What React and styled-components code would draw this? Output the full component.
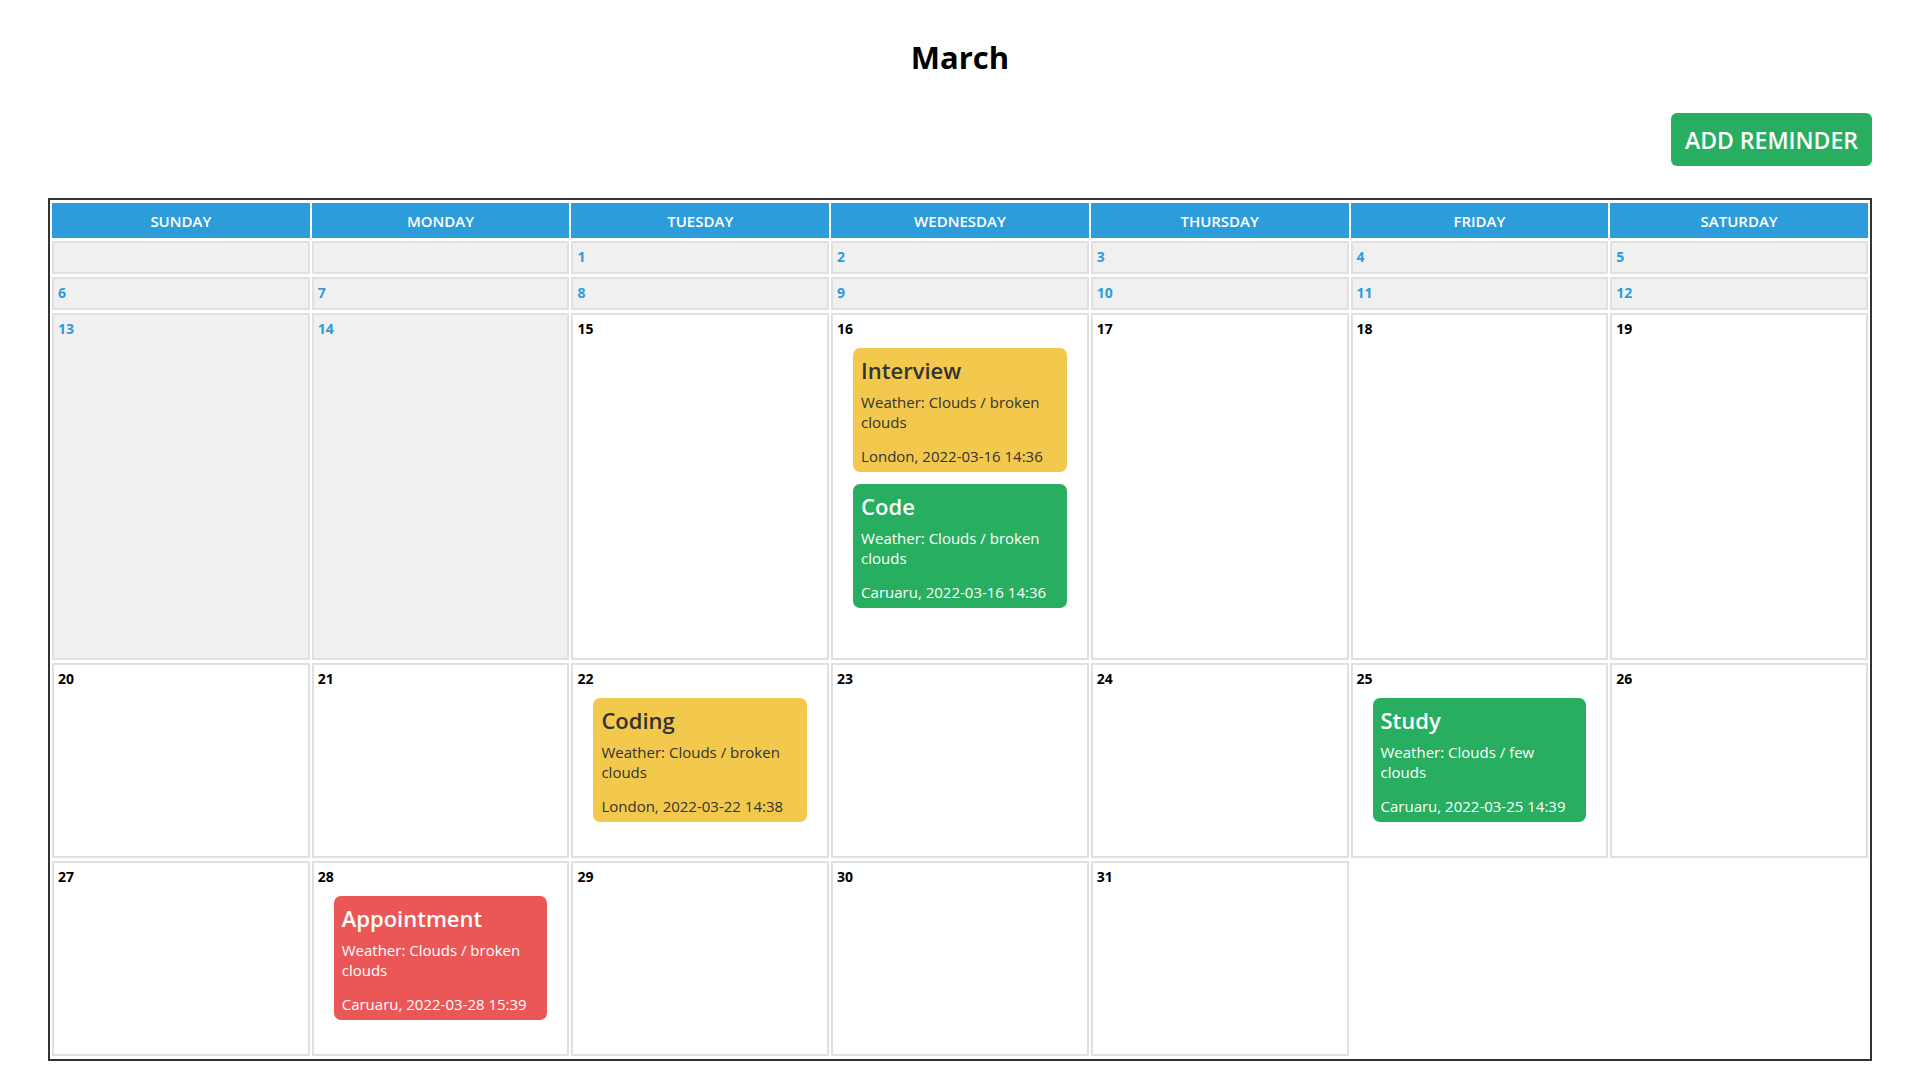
import React from 'react'
import styled, { createGlobalStyle } from 'styled-components'

const GlobalStyle = createGlobalStyle`
  * { box-sizing: border-box; }
  body {
    margin: 0;
    background: #fff;
    color: #000;
    font-family: "Open Sans", "Noto Sans", "Liberation Sans", sans-serif;
  }
`

const WEEKDAYS = ['Sunday', 'Monday', 'Tuesday', 'Wednesday', 'Thursday', 'Friday', 'Saturday']
const TODAY = 15
const FIRST_WEEKDAY = 2
const DAYS_IN_MONTH = 31

const COLORS = {
  yellow: { bg: '#F2C94C', fg: '#333333' },
  green: { bg: '#27AE60', fg: '#ffffff' },
  red: { bg: '#EB5757', fg: '#ffffff' },
}

const reminders = {
  16: [
    { title: 'Interview', weather: 'Clouds / broken clouds', city: 'London', date: '2022-03-16 14:36', color: 'yellow' },
    { title: 'Code', weather: 'Clouds / broken clouds', city: 'Caruaru', date: '2022-03-16 14:36', color: 'green' },
  ],
  22: [{ title: 'Coding', weather: 'Clouds / broken clouds', city: 'London', date: '2022-03-22 14:38', color: 'yellow' }],
  25: [{ title: 'Study', weather: 'Clouds / few clouds', city: 'Caruaru', date: '2022-03-25 14:39', color: 'green' }],
  28: [{ title: 'Appointment', weather: 'Clouds / broken clouds', city: 'Caruaru', date: '2022-03-28 15:39', color: 'red' }],
}

const buildWeeks = () => {
  const cells = [...Array(FIRST_WEEKDAY).fill(null), ...Array.from({ length: DAYS_IN_MONTH }, (_, i) => i + 1)]
  const weeks = []
  for (let i = 0; i < cells.length; i += 7) weeks.push(cells.slice(i, i + 7))
  return weeks
}

const App = () => {
  const weeks = buildWeeks()

  return (
    <Page>
      <GlobalStyle />
      <Title>March</Title>
      <Toolbar>
        <AddButton>ADD REMINDER</AddButton>
      </Toolbar>
      <Calendar>
        <thead>
          <tr>
            {WEEKDAYS.map((d) => (
              <HeadCell key={d}>{d.toUpperCase()}</HeadCell>
            ))}
          </tr>
        </thead>
        <tbody>
          {weeks.map((week, wi) => {
            const count = week.reduce((m, d) => Math.max(m, d ? (reminders[d] || []).length : 0), 0)
            return (
              <Week key={wi} $tall={count > 1}>
                {week.map((day, di) => {
                  const past = day === null || day < TODAY
                  return (
                    <DayCell key={di} $past={past}>
                      <DayNumber $past={past}>{day}</DayNumber>
                      {day &&
                        (reminders[day] || []).map((r, ri) => (
                          <Card key={ri} $color={r.color}>
                            <CardTitle>{r.title}</CardTitle>
                            <Weather>Weather: {r.weather}</Weather>
                            <Place>
                              {r.city}, {r.date}
                            </Place>
                          </Card>
                        ))}
                    </DayCell>
                  )
                })}
              </Week>
            )
          })}
        </tbody>
      </Calendar>
    </Page>
  )
}

export default App

const Page = styled.div`
  padding-top: 35px;
  min-height: 1080px;
`

const Title = styled.h1`
  margin: 0;
  text-align: center;
  font-size: 31px;
  line-height: 44px;
  font-weight: 700;
`

const Toolbar = styled.div`
  width: 95%;
  margin: 34px auto 0;
  display: flex;
  justify-content: flex-end;
`

const AddButton = styled.button`
  height: 53px;
  padding: 0 14px;
  border: none;
  border-radius: 6px;
  background: #27ae60;
  color: #fff;
  font-family: inherit;
  font-size: 23px;
  font-weight: 600;
  cursor: pointer;
`

const Calendar = styled.table`
  width: 95%;
  margin: 32px auto 0;
  table-layout: fixed;
  border: 2px solid #333333;
  border-spacing: 2px 3px;
`

const HeadCell = styled.th`
  height: 35px;
  padding: 0;
  background: #2d9cdb;
  color: #fff;
  font-size: 15px;
  font-weight: 600;
  text-align: center;
  vertical-align: middle;
`

const Week = styled.tr`
  height: ${(p) => (p.$tall ? '347px' : 'auto')};
`

const DayCell = styled.td`
  padding: 3px 4px 5px;
  vertical-align: top;
  border: 2px solid #e0e0e0;
  background: ${(p) => (p.$past ? '#f0f0f0' : '#fff')};
`

const DayNumber = styled.div`
  height: 21px;
  font-size: 14px;
  line-height: 21px;
  font-weight: 700;
  color: ${(p) => (p.$past ? '#2d9cdb' : '#000')};
`

const Card = styled.div`
  margin: 9px 16px 29px;
  padding: 7px 8px 6px;
  border-radius: 7px;
  background: ${(p) => COLORS[p.$color].bg};
  color: ${(p) => COLORS[p.$color].fg};

  & + & {
    margin-top: -17px;
  }
`

const CardTitle = styled.div`
  font-size: 22px;
  line-height: 30px;
  font-weight: 600;
  margin-bottom: 7px;
`

const Weather = styled.p`
  margin: 0 0 14px;
  font-size: 15px;
  line-height: 20px;
`

const Place = styled.p`
  margin: 0;
  font-size: 15px;
  line-height: 20px;
  white-space: nowrap;
`
